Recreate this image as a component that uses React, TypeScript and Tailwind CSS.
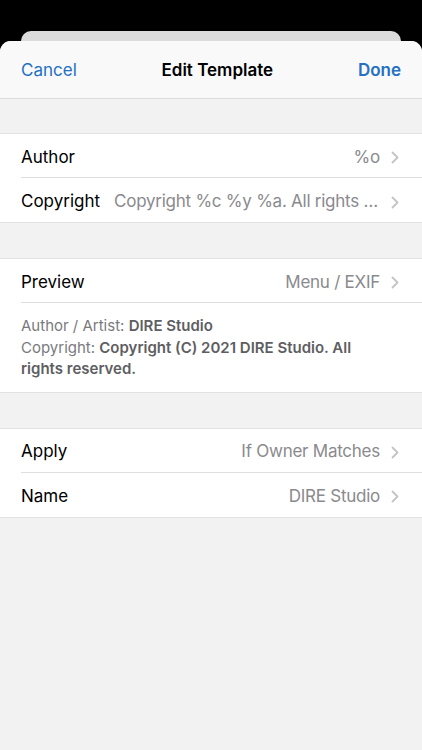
import React from 'react';

const Chevron: React.FC = () => (
  <svg width="8" height="13" viewBox="0 0 8 13" className="shrink-0 ml-[11px]">
    <path d="M1.5 1.5 L6.5 6.5 L1.5 11.5" fill="none" stroke="#c4c4c7" strokeWidth="1.8" strokeLinecap="round" strokeLinejoin="round" />
  </svg>
);

interface RowProps {
  label: string;
  value: string;
  last?: boolean;
}

const Row: React.FC<RowProps> = ({ label, value, last }) => (
  <div className="pl-[21px] bg-white">
    <div className={`flex items-center h-[44px] pt-[4px] pr-[23px] ${last ? '' : 'border-b border-[#dedee0]'}`}>
      <span className="text-[17px] text-black shrink-0 mr-[14px]">{label}</span>
      <span className="flex-1 min-w-0 truncate text-right text-[17px] tracking-[-0.25px] text-[#8a8a8e]">{value}</span>
      <Chevron />
    </div>
  </div>
);

export default function App() {
  return (
    <div className="w-[422px] h-[750px] bg-black overflow-hidden" style={{ fontFamily: 'Inter, "Noto Sans", sans-serif' }}>
      <div className="pt-[31px] px-[21px]">
        <div className="h-[10px] bg-[#dcdcdc] rounded-t-[10px]" />
      </div>
      <div className="h-[709px] bg-[#f2f2f2] rounded-t-[11px] overflow-hidden">
        <div className="h-[58px] bg-[#f9f9f9] border-b border-[#dcdcdc] flex items-center justify-between px-[21px] pt-[2px]">
          <span className="text-[17px] text-[#2470c2]">Cancel</span>
          <span className="text-[17px] font-semibold text-black">Edit Template</span>
          <span className="text-[17px] font-semibold text-[#2470c2]">Done</span>
        </div>
        <div className="h-[35px] border-b border-[#e2e2e2]" />
        <div className="bg-white border-b border-[#e2e2e2]">
          <Row label="Author" value="%o" />
          <Row label="Copyright" value="Copyright %c %y %a. All rights reserved." last />
        </div>
        <div className="h-[36px] border-b border-[#e2e2e2]" />
        <div className="bg-white border-b border-[#e2e2e2]">
          <Row label="Preview" value="Menu / EXIF" />
          <div className="pl-[21px] pr-[40px] pt-[12px] pb-[12px] text-[15px] leading-[21.5px] text-[#7a7a7e]">
            <div>Author / Artist: <span className="font-semibold text-[#5e5e62]">DIRE Studio</span></div>
            <div>Copyright: <span className="font-semibold text-[#5e5e62]">Copyright (C) 2021 DIRE Studio. All rights reserved.</span></div>
          </div>
        </div>
        <div className="h-[36px] border-b border-[#e2e2e2]" />
        <div className="bg-white border-b border-[#e2e2e2]">
          <Row label="Apply" value="If Owner Matches" />
          <Row label="Name" value="DIRE Studio" last />
        </div>
      </div>
    </div>
  );
}
